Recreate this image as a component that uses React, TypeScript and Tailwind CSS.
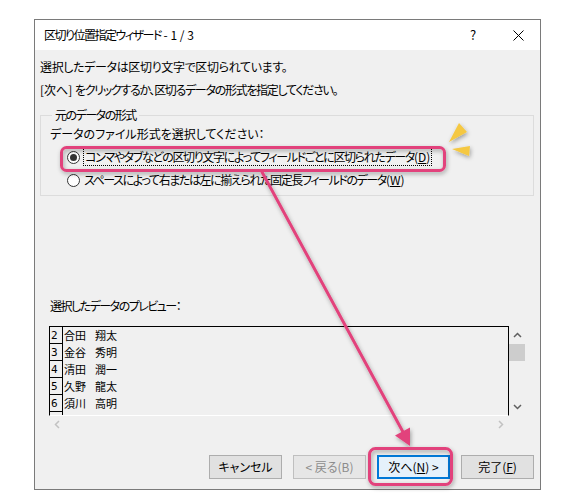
import React from "react";

const font = "font-['Noto_Sans_CJK_JP',sans-serif] [font-feature-settings:'palt']";

const rows = [
  { n: "2", first: "合田", last: "翔太" },
  { n: "3", first: "金谷", last: "秀明" },
  { n: "4", first: "清田", last: "潤一" },
  { n: "5", first: "久野", last: "龍太" },
  { n: "6", first: "須川", last: "高明" },
];

function Radio({ checked }: { checked?: boolean }) {
  return (
    <span className="w-[13px] h-[13px] rounded-full border border-[#333] bg-white flex items-center justify-center flex-shrink-0">
      {checked && <span className="w-[7px] h-[7px] rounded-full bg-[#333]" />}
    </span>
  );
}

function Btn({ children, disabled, focused }: { children: React.ReactNode; disabled?: boolean; focused?: boolean }) {
  return (
    <div
      className={`w-[73px] h-[24px] flex items-center justify-center text-[12px] ${
        focused
          ? "border-2 border-[#0078d7] bg-[#e5f1fb] text-black"
          : disabled
          ? "border border-[#bfbfbf] bg-[#e6e6e6] text-[#8c8c8c]"
          : "border border-[#adadad] bg-[#e1e1e1] text-black"
      }`}
    >
      {children}
    </div>
  );
}

export default function App() {
  return (
    <div className={`relative w-[572px] h-[502px] bg-white overflow-hidden pt-[19px] pl-[34px] text-black ${font}`}>
      <div className="w-[507px] h-[471px] border border-[#7a7a7a] flex flex-col">
        {/* title bar */}
        <div className="h-[30px] bg-white flex items-center pl-[9px] text-[12px]">
          <span>
            <span className="tracking-[-1.5px]">区切り位置指定ウィザード</span> - 1 / 3
          </span>
          <div className="ml-auto flex items-center">
            <span className="w-[46px] text-center text-[13px]">?</span>
            <span className="w-[44px] flex justify-center">
              <svg width="11" height="11" viewBox="0 0 11 11">
                <path d="M0.5 0.5L10.5 10.5M10.5 0.5L0.5 10.5" stroke="#000" strokeWidth="1" />
              </svg>
            </span>
          </div>
        </div>

        {/* body */}
        <div className="flex-1 bg-[#f0f0f0] px-[5px] pt-[5px] pb-[10px] flex flex-col text-[12px]">
          <p className="leading-[23px] tracking-[-0.35px]">選択したデータは区切り文字で区切られています。</p>
          <p className="leading-[23px]">
            [次へ] <span className="tracking-[-1.3px]">をクリックするか、区切るデータの形式を指定してください。</span>
          </p>

          <fieldset className="mt-[6px] w-[494px] border border-[#dcdcdc] pl-[9px] pb-[4px]">
            <legend className="ml-[2px] px-[3px] leading-[16px] tracking-[-1.5px]">元のデータの形式</legend>
            <div className="flex flex-col gap-[1px]">
              <div className="h-[22px] flex items-center">データのファイル形式を選択してください：</div>
              <div className="h-[22px] flex items-center pl-[17px] gap-[3px]">
                <Radio checked />
                <span className="border border-dotted border-black px-[1px] leading-[16px]">
                  <span className="tracking-[-1.35px]">コンマやタブなどの区切り文字によってフィールドごとに区切られたデータ</span>(<u>D</u>)
                </span>
              </div>
              <div className="h-[22px] flex items-center pl-[17px] gap-[4px]">
                <Radio />
                <span>
                  <span className="tracking-[-1.4px]">スペースによって右または左に揃えられた固定長フィールドのデータ</span>(<u>W</u>)
                </span>
              </div>
            </div>
          </fieldset>

          <p className="mt-[100px] ml-[10px] leading-[20px] tracking-[-1.5px]">選択したデータのプレビュー：</p>

          {/* preview */}
          <div className="mt-[10px] ml-[9px] grid grid-cols-[460px_16px] grid-rows-[90px_16px]">
            <div className="border-t border-l border-r border-b border-t-black border-l-black border-r-black border-b-white overflow-hidden text-[11px]">
              {rows.map((r) => (
                <div key={r.n} className="h-[17px] flex">
                  <div className="w-[13px] h-[17px] border-r border-b border-black flex items-end pl-[1px] leading-[14px] font-['DejaVu_Sans_Mono',monospace] text-[11px]">
                    {r.n}
                  </div>
                  <div className="pl-[1px] leading-[17px] flex gap-[9px]">
                    <span>{r.first}</span>
                    <span>{r.last}</span>
                  </div>
                </div>
              ))}
              <div className="w-[13px] h-[17px] border-r border-black" />
            </div>
            <div className="flex flex-col items-center">
              <div className="h-[18px] flex items-center justify-center">
                <svg width="9" height="6" viewBox="0 0 9 6">
                  <path d="M1 5L4.5 1.5L8 5" stroke="#606060" strokeWidth="1.5" fill="none" />
                </svg>
              </div>
              <div className="w-[16px] h-[17px] bg-[#cdcdcd]" />
              <div className="flex-1" />
              <div className="h-[18px] flex items-center justify-center">
                <svg width="9" height="6" viewBox="0 0 9 6">
                  <path d="M1 1L4.5 4.5L8 1" stroke="#606060" strokeWidth="1.5" fill="none" />
                </svg>
              </div>
            </div>
            <div className="flex items-center justify-between px-[5px]">
              <svg width="6" height="9" viewBox="0 0 6 9">
                <path d="M5 1L1.5 4.5L5 8" stroke="#c2c2c2" strokeWidth="1.5" fill="none" />
              </svg>
              <svg width="6" height="9" viewBox="0 0 6 9">
                <path d="M1 1L4.5 4.5L1 8" stroke="#c2c2c2" strokeWidth="1.5" fill="none" />
              </svg>
            </div>
            <div />
          </div>

          {/* buttons */}
          <div className="mt-auto flex justify-end gap-[11px] pr-[1px]">
            <Btn>キャンセル</Btn>
            <Btn disabled>&lt; 戻る(B)</Btn>
            <Btn focused>
              次へ(<u>N</u>) &gt;
            </Btn>
            <Btn>
              完了(<u>F</u>)
            </Btn>
          </div>
        </div>
      </div>

      {/* annotations */}
      <svg className="absolute top-0 left-0 pointer-events-none" width="572" height="502" viewBox="0 0 572 502">
        <defs>
          <filter id="sh" x="-20%" y="-20%" width="140%" height="140%">
            <feDropShadow dx="1" dy="2" stdDeviation="2" floodColor="#000" floodOpacity="0.35" />
          </filter>
        </defs>
        <g filter="url(#sh)">
          <rect x="61.5" y="147.5" width="383" height="23" rx="5" fill="none" stroke="#e2437c" strokeWidth="3" />
          <rect x="369.5" y="448.5" width="82" height="36" rx="6" fill="none" stroke="#e2437c" strokeWidth="3" />
          <line x1="262" y1="172" x2="403" y2="432" stroke="#e2437c" strokeWidth="3" strokeLinecap="round" />
          <polygon points="410,446 395,435.5 410,427.5" fill="#e2437c" />
          <polygon points="449,142 459,123 467,132" fill="#f5c842" />
          <polygon points="452,149 470,146 469,156" fill="#f5c842" />
        </g>
      </svg>
    </div>
  );
}
